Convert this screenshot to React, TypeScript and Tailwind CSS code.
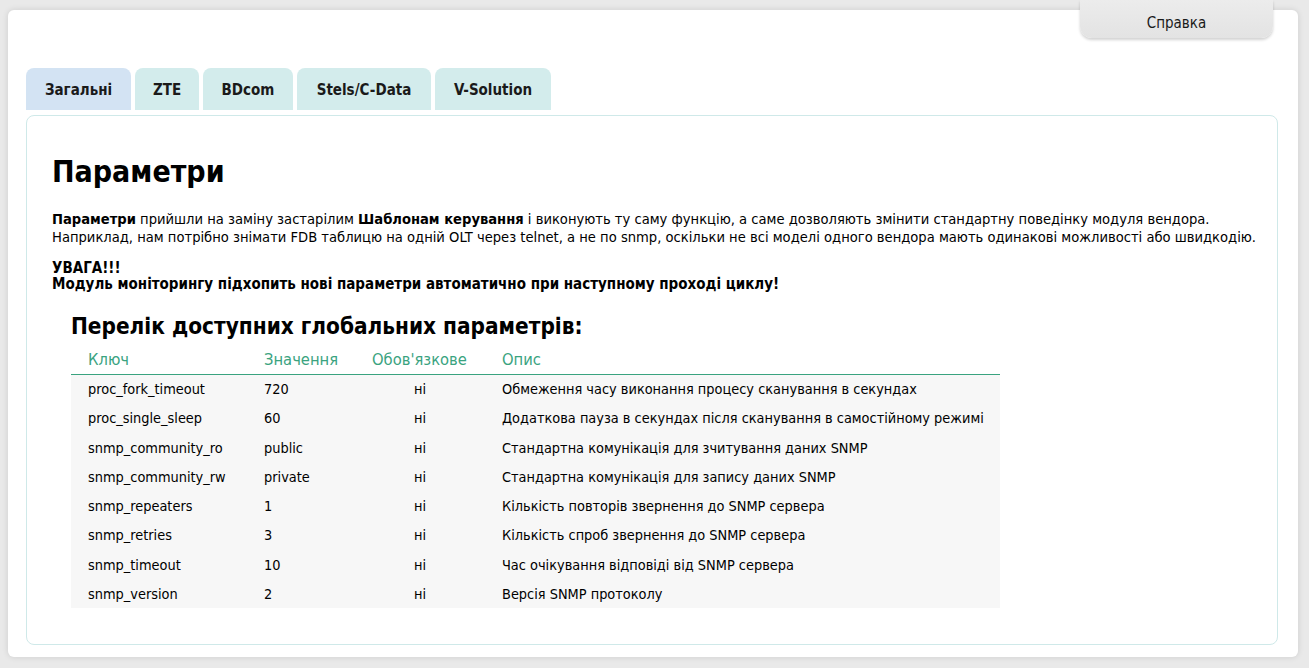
import React from "react";

const rows: [string, string, string, string][] = [
  ["proc_fork_timeout", "720", "ні", "Обмеження часу виконання процесу сканування в секундах"],
  ["proc_single_sleep", "60", "ні", "Додаткова пауза в секундах після сканування в самостійному режимі"],
  ["snmp_community_ro", "public", "ні", "Стандартна комунікація для зчитування даних SNMP"],
  ["snmp_community_rw", "private", "ні", "Стандартна комунікація для запису даних SNMP"],
  ["snmp_repeaters", "1", "ні", "Кількість повторів звернення до SNMP сервера"],
  ["snmp_retries", "3", "ні", "Кількість спроб звернення до SNMP сервера"],
  ["snmp_timeout", "10", "ні", "Час очікування відповіді від SNMP сервера"],
  ["snmp_version", "2", "ні", "Версія SNMP протоколу"],
];

const tabs = [
  { label: "Загальні", w: "w-[105px]", active: true },
  { label: "ZTE", w: "w-[64px]", active: false },
  { label: "BDcom", w: "w-[90px]", active: false },
  { label: "Stels/C-Data", w: "w-[134px]", active: false },
  { label: "V-Solution", w: "w-[116px]", active: false },
];

export default function App() {
  return (
    <div
      className="relative h-[668px] w-[1309px] overflow-hidden bg-[#e9e9e9] pt-[10px] pl-[8px] text-black"
      style={{ fontFamily: '"DejaVu Sans Condensed", "DejaVu Sans", sans-serif' }}
    >
      <div className="h-[647px] w-[1290px] rounded-[6px] bg-white shadow-[0_0_6px_rgba(0,0,0,0.12)] pl-[18px] pt-[58px]">
        <div className="flex gap-[4px]">
          {tabs.map((t) => (
            <div
              key={t.label}
              className={`${t.w} flex h-[42px] items-center justify-center rounded-t-[8px] pt-[2px] text-[15px] font-bold text-[#1a1a1a] ${
                t.active ? "bg-[#d3e3f3]" : "bg-[#d3ecec]"
              }`}
            >
              {t.label}
            </div>
          ))}
        </div>
        <div className="mt-[5px] h-[530px] w-[1252px] rounded-[8px] border border-[#cfe9e9] px-[25px] pt-[38px]">
          <h1 className="text-[30px] font-bold leading-[36px]">Параметри</h1>
          <p className="mt-[20px] whitespace-nowrap text-[14.6px] leading-[18px]">
            <b>Параметри</b> прийшли на заміну застарілим <b>Шаблонам керування</b> і виконують ту саму функцію, а саме
            дозволяють змінити стандартну поведінку модуля вендора.
            <br />
            Наприклад, нам потрібно знімати FDB таблицю на одній OLT через telnet, а не по snmp, оскільки не всі моделі
            одного вендора мають одинакові можливості або швидкодію.
          </p>
          <p className="mt-[14px] text-[15px] font-bold leading-[16px]">
            УВАГА!!!
            <br />
            Модуль моніторингу підхопить нові параметри автоматично при наступному проході циклу!
          </p>
          <div className="ml-[19px] mt-[20px]">
            <h2 className="text-[22.4px] font-bold leading-[28px]">Перелік доступних глобальних параметрів:</h2>
            <table className="mt-[8px] w-[929px] border-collapse text-[14.4px]">
              <thead>
                <tr className="text-left text-[16.4px] text-[#3aa37f]">
                  <th className="w-[176px] border-b border-[#3aa37f] pb-[1px] pl-[17px] font-normal">Ключ</th>
                  <th className="w-[108px] border-b border-[#3aa37f] pb-[1px] pl-[17px] font-normal">Значення</th>
                  <th className="w-[130px] border-b border-[#3aa37f] pb-[1px] pl-[17px] font-normal">Обов'язкове</th>
                  <th className="border-b border-[#3aa37f] pb-[1px] pl-[17px] font-normal">Опис</th>
                </tr>
              </thead>
              <tbody className="bg-[#f7f7f7]">
                {rows.map((r) => (
                  <tr key={r[0]} className="h-[29.3px]">
                    <td className="pl-[17px] pt-[2px]">{r[0]}</td>
                    <td className="pl-[17px] pt-[2px]">{r[1]}</td>
                    <td className="pt-[2px] text-center">{r[2]}</td>
                    <td className="pl-[17px] pt-[2px]">{r[3]}</td>
                  </tr>
                ))}
              </tbody>
            </table>
          </div>
        </div>
      </div>
      <div className="absolute right-[36px] top-0 flex h-[38px] w-[193px] items-center justify-center rounded-b-[12px] bg-gradient-to-b from-[#ececec] to-[#e3e3e3] pt-[8px] text-[15px] text-[#1a1a1a] shadow-[0_2px_3px_rgba(0,0,0,0.18)]">
        Справка
      </div>
    </div>
  );
}
